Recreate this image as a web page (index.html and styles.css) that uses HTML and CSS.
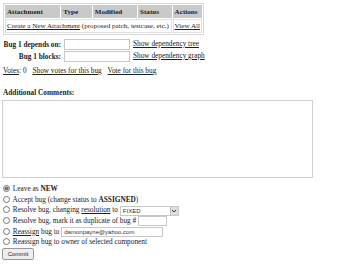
FILE: index.html
```html
<!DOCTYPE html>
<html lang="en">
<head>
  <meta charset="UTF-8">
  <title>Bug 1</title>
  <link rel="stylesheet" href="styles.css">
</head>
<body>

  <!-- Pièces jointes -->
  <table class="attach">
    <tr>
      <th class="c-name">Attachment</th>
      <th class="c-type">Type</th>
      <th class="c-mod">Modified</th>
      <th class="c-status">Status</th>
      <th class="c-act">Actions</th>
    </tr>
    <tr>
      <td colspan="4"><a href="#">Create a New Attachment</a> (proposed patch, testcase, etc.)</td>
      <td><a href="#">View All</a></td>
    </tr>
  </table>

  <!-- Dépendances -->
  <table class="deps">
    <tr>
      <th>Bug 1 depends on:</th>
      <td><input type="text" class="dep-input"></td>
      <td class="dep-link"><a href="#">Show dependency tree</a></td>
    </tr>
    <tr>
      <th>Bug 1 blocks:</th>
      <td><input type="text" class="dep-input"></td>
      <td class="dep-link"><a href="#">Show dependency graph</a></td>
    </tr>
  </table>

  <div class="votes">
    <a href="#">Votes</a>: 0
    <a href="#" class="gap">Show votes for this bug</a>
    <a href="#" class="gap">Vote for this bug</a>
  </div>

  <div class="comments-title">Additional Comments:</div>
  <textarea class="comments"></textarea>

  <!-- Actions sur le bug -->
  <div class="actions">
    <div class="row"><input type="radio" name="act" checked> Leave as <b>NEW</b></div>
    <div class="row"><input type="radio" name="act"> Accept bug (change status to <b>ASSIGNED</b>)</div>
    <div class="row"><input type="radio" name="act"> Resolve bug, changing <a href="#">resolution</a> to
      <span class="select-wrap"><select class="resolution"><option>FIXED</option></select><span class="select-btn"><svg width="6" height="4" viewBox="0 0 6 4"><path d="M1 1 L3 3 L5 1" fill="none" stroke="#333" stroke-width="1"/></svg></span></span></div>
    <div class="row"><input type="radio" name="act"> Resolve bug, mark it as duplicate of bug #
      <input type="text" class="dup"></div>
    <div class="row"><input type="radio" name="act"> <a href="#">Reassign</a> bug to
      <input type="text" class="assignee" value="damonpayne@yahoo.com"></div>
    <div class="row"><input type="radio" name="act"> Reassign bug to owner of selected component</div>
    <button type="submit" class="commit">Commit</button>
  </div>

</body>
</html>
```

FILE: styles.css
```css
/* Style général */
body {
  margin: 0;
  padding: 3px 2px;
  font-family: "Liberation Serif", "Times New Roman", serif;
  font-size: 7.3px;
  color: #222;
  background: #fff;
}

a {
  color: #222;
}

/* Tableau des pièces jointes */
.attach {
  border: 1px solid #d8d8d8;
  border-spacing: 1px;
  margin-left: 1px;
  width: 201px;
  white-space: nowrap;
  font-size: 7.1px;
}

.attach th {
  background: #c9c9c9;
  text-align: left;
  font-weight: bold;
  height: 13px;
  padding: 0 2px;
}

.attach td {
  height: 12px;
  padding: 0 1px;
  border: 1px solid #e0e0e0;
}

.c-name { width: 52px; }
.c-type { width: 27px; }
.c-mod { width: 41px; }
.c-status { width: 30px; }

/* Dépendances */
.deps {
  margin-top: 3px;
  border-spacing: 0 1px;
}

.deps th {
  text-align: right;
  font-weight: bold;
  padding: 0 3px 0 1px;
  width: 58px;
  white-space: nowrap;
}

.deps td {
  padding: 0;
}

.dep-input {
  width: 66px;
  height: 11px;
  box-sizing: border-box;
  border: 1px solid #c8c8c8;
  margin: 0;
  padding: 0;
  display: block;
}

.dep-link {
  padding-left: 3px !important;
  vertical-align: top;
  white-space: nowrap;
}

.votes {
  margin: 3px 0 0 1px;
}

.votes .gap {
  margin-left: 4px;
}

.comments-title {
  font-weight: bold;
  margin: 13px 0 0 1px;
}

.comments {
  display: block;
  width: 311px;
  height: 78px;
  margin: 3px 0 0 0;
  box-sizing: border-box;
  border: 1px solid #cfcfcf;
  resize: none;
  overflow-y: scroll;
}

/* Boutons radio */
.actions {
  margin-top: 6px;
}

.row {
  height: 10.7px;
  line-height: 10.7px;
  white-space: nowrap;
}

.row input[type="radio"] {
  width: 7px;
  height: 7px;
  margin: 0 1px 0 1px;
  vertical-align: -1px;
  accent-color: #777;
}

.row input[type="text"] {
  height: 10px;
  box-sizing: border-box;
  border: 1px solid #c8c8c8;
  padding: 0 2px;
  margin: 0;
  vertical-align: middle;
  font-size: 6px;
  font-family: "Liberation Sans", Arial, sans-serif;
  color: #333;
}

.select-wrap {
  position: relative;
  display: inline-block;
  vertical-align: middle;
  height: 10px;
}

.resolution {
  appearance: none;
  display: block;
  width: 59px;
  height: 10px;
  font-size: 6px;
  font-family: "Liberation Sans", Arial, sans-serif;
  padding: 0 2px;
  margin: 0;
  border: 1px solid #c8c8c8;
  background: #fff;
  color: #333;
}

/* Petit bouton de la liste déroulante */
.select-btn {
  position: absolute;
  right: 1px;
  top: 1px;
  width: 7px;
  height: 8px;
  background: #ddd;
  border-left: 1px solid #bbb;
  display: flex;
  align-items: center;
  justify-content: center;
}

.dup {
  width: 29px;
}

.assignee {
  width: 102px;
}

.commit {
  display: block;
  margin-top: 0;
  font-family: "Liberation Sans", Arial, sans-serif;
  font-size: 6px;
  height: 12px;
  width: 32px;
  padding: 0;
  border: 1px solid #999;
  border-radius: 2px;
  background: #eee;
  color: #222;
}
```
